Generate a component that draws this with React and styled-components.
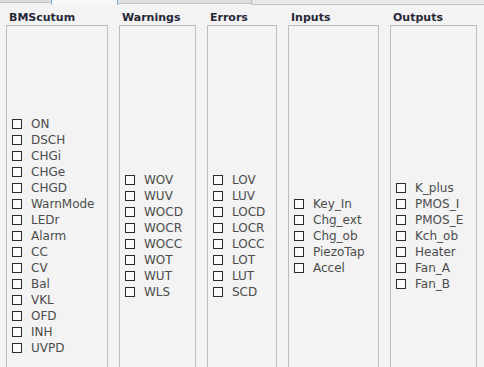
import React from "react";
import styled, { createGlobalStyle } from "styled-components";

const GlobalStyle = createGlobalStyle`
  html, body {
    margin: 0;
    padding: 0;
    overflow: hidden;
    background: #f3f3f3;
    font-family: "DejaVu Sans", Verdana, sans-serif;
  }
`;

const groups = [
  {
    title: "BMScutum",
    width: 102,
    items: ["ON", "DSCH", "CHGi", "CHGe", "CHGD", "WarnMode", "LEDr", "Alarm", "CC", "CV", "Bal", "VKL", "OFD", "INH", "UVPD"],
  },
  {
    title: "Warnings",
    width: 77,
    items: ["WOV", "WUV", "WOCD", "WOCR", "WOCC", "WOT", "WUT", "WLS"],
  },
  {
    title: "Errors",
    width: 70,
    items: ["LOV", "LUV", "LOCD", "LOCR", "LOCC", "LOT", "LUT", "SCD"],
  },
  {
    title: "Inputs",
    width: 91,
    items: ["Key_In", "Chg_ext", "Chg_ob", "PiezoTap", "Accel"],
  },
  {
    title: "Outputs",
    width: 87,
    items: ["K_plus", "PMOS_I", "PMOS_E", "Kch_ob", "Heater", "Fan_A", "Fan_B"],
  },
];

export default function App() {
  return (
    <>
      <GlobalStyle />
      <S.Page>
        <S.TabBar>
          <S.Tab $w={51} $h={3} $bg="#dadada" />
          <S.ActiveTab $w={67} />
          <S.Tab $w={134} $h={4} $bg="#dedede" $edge />
          <S.TabRest />
        </S.TabBar>
        <S.Groups>
          {groups.map((g) => (
            <S.Group key={g.title} style={{ width: g.width }}>
              <S.Title>{g.title}</S.Title>
              <S.Box>
                {g.items.map((item) => (
                  <S.Item key={item}>
                    <S.Check />
                    <span>{item}</span>
                  </S.Item>
                ))}
              </S.Box>
            </S.Group>
          ))}
        </S.Groups>
      </S.Page>
    </>
  );
}

const S = {
  Page: styled.div`
    width: 484px;
    height: 367px;
    overflow: hidden;
  `,
  TabBar: styled.div`
    display: flex;
    align-items: flex-start;
    height: 5px;
  `,
  Tab: styled.div`
    width: ${(p) => p.$w}px;
    height: ${(p) => p.$h}px;
    background: ${(p) => p.$bg};
    border-bottom: 1px solid #c4c4c4;
    border-right: ${(p) => (p.$edge ? "1px solid #b4b4b4" : "none")};
    box-sizing: border-box;
  `,
  ActiveTab: styled.div`
    width: ${(p) => p.$w}px;
    height: 5px;
    background: #f7f7f7;
    border-left: 1px solid #7eb4dc;
    border-right: 1px solid #7eb4dc;
    box-sizing: border-box;
  `,
  TabRest: styled.div`
    flex: 1;
    height: 5px;
    background: #e9e9e9;
    border-bottom: 1px solid #c4c4c4;
    box-sizing: border-box;
  `,
  Groups: styled.div`
    display: flex;
    gap: 11px;
    padding: 6px 0 0 6px;
  `,
  Group: styled.div`
    flex: none;
    display: flex;
    flex-direction: column;
  `,
  Title: styled.div`
    font-size: 11px;
    font-weight: bold;
    line-height: 14px;
    height: 14px;
    padding-left: 3px;
    color: #262838;
    white-space: nowrap;
  `,
  Box: styled.div`
    box-sizing: border-box;
    height: 422px;
    border: 1px solid #bdbdbd;
    display: flex;
    flex-direction: column;
    justify-content: center;
    padding-left: 5px;
  `,
  Item: styled.div`
    display: flex;
    align-items: center;
    gap: 9px;
    height: 16px;
    font-size: 12px;
    line-height: 16px;
    color: #4c4c4c;
    white-space: nowrap;
  `,
  Check: styled.div`
    flex: none;
    box-sizing: border-box;
    width: 10px;
    height: 10px;
    border: 1px solid #2a2a2a;
    background: #fafafa;
  `,
};
